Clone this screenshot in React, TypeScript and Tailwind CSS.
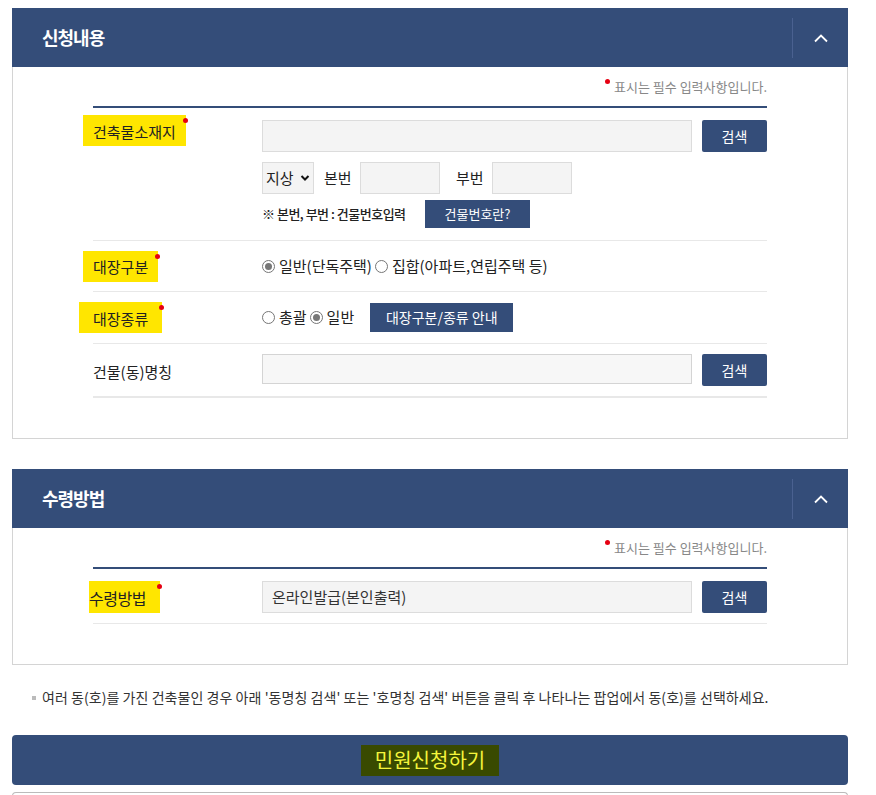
import React from 'react';

const font = { fontFamily: '"Noto Sans CJK KR", "Noto Sans", sans-serif' };

const Header: React.FC<{ title: string }> = ({ title }) => (
  <div className="flex items-center h-[59px] bg-[#344d79] text-white">
    <h2 className="flex-1 pl-[30px] text-[18px] font-bold tracking-[-1px]">{title}</h2>
    <div className="flex items-center justify-center w-[56px] h-[40px] border-l border-[#4a6190]">
      <svg width="16" height="10" viewBox="0 0 16 10" fill="none">
        <path d="M2 8.5 L8 2.5 L14 8.5" stroke="white" strokeWidth="1.8" />
      </svg>
    </div>
  </div>
);

const RequiredNote: React.FC = () => (
  <div className="flex justify-end pt-[11px] pr-[80px]">
    <span className="relative pl-[9px] text-[13px] text-[#888] leading-[18px]">
      <span className="absolute left-0 top-[1px] w-[5px] h-[5px] rounded-full bg-[#e60012]" />
      표시는 필수 입력사항입니다.
    </span>
  </div>
);

const Label: React.FC<{ text: string; required?: boolean; className?: string }> = ({ text, required, className }) => (
  <span className={`relative inline-flex items-end h-[31px] pb-[3px] bg-[#ffe600] text-[15px] text-[#222] ${className ?? ''}`}>
    {text}
    {required && <span className="absolute right-[-2px] top-[3px] w-[5px] h-[5px] rounded-full bg-[#e60012]" />}
  </span>
);

const Btn: React.FC<{ text: string; className?: string }> = ({ text, className }) => (
  <button className={`flex items-center justify-center bg-[#344d79] text-white rounded-[2px] ${className ?? ''}`}>{text}</button>
);

const Radio: React.FC<{ checked?: boolean; text: string }> = ({ checked, text }) => (
  <label className="inline-flex items-center gap-[4px] text-[15px] text-[#222]">
    <span className="flex items-center justify-center w-[13px] h-[13px] rounded-full border border-[#767676] bg-white">
      {checked && <span className="w-[7px] h-[7px] rounded-full bg-[#777]" />}
    </span>
    {text}
  </label>
);

const App: React.FC = () => {
  return (
    <div className="w-[876px] bg-white pt-2 pl-3" style={font}>
      <div className="w-[836px]">
        {/* 신청내용 */}
        <section>
          <Header title="신청내용" />
          <div className="border-x border-b border-[#d4d4d4] pb-[40px]">
            <RequiredNote />
            <div className="mx-[80px] mt-[10px] border-t-2 border-[#344d79]">
              <div className="flex items-start pt-[7px] pb-[12px] border-b border-[#e8e8e8]">
                <div className="w-[169px]">
                  <Label text="건축물소재지" required className="ml-[-10px] px-[10px]" />
                </div>
                <div className="flex-1 pt-[5px]">
                  <div className="flex gap-[10px]">
                    <input className="w-[430px] h-[32px] bg-[#f4f4f4] border border-[#dcdcdc]" />
                    <Btn text="검색" className="w-[65px] h-[32px] text-[14px]" />
                  </div>
                  <div className="flex items-center mt-[10px] text-[15px] text-[#222]">
                    <div className="flex items-center gap-[6px] w-[52px] h-[32px] pl-[3px] bg-[#f4f4f4] border border-[#dcdcdc]">
                      지상
                      <svg width="10" height="8" viewBox="0 0 10 8" fill="none">
                        <path d="M1.5 2 L5 5.5 L8.5 2" stroke="#111" strokeWidth="2" />
                      </svg>
                    </div>
                    <span className="ml-[10px] w-[36px]">본번</span>
                    <input className="w-[80px] h-[32px] bg-[#f4f4f4] border border-[#dcdcdc]" />
                    <span className="ml-[16px] w-[36px]">부번</span>
                    <input className="w-[80px] h-[32px] bg-[#f4f4f4] border border-[#dcdcdc]" />
                  </div>
                  <div className="flex items-center mt-[6px]">
                    <span className="w-[163px] text-[13px] text-[#222] font-medium tracking-[-0.5px]">※ 본번, 부번 : 건물번호입력</span>
                    <Btn text="건물번호란?" className="w-[105px] h-[28px] text-[13px] rounded-none" />
                  </div>
                </div>
              </div>
              <div className="flex items-center h-[51px] border-b border-[#e8e8e8]">
                <div className="w-[169px]">
                  <Label text="대장구분" required className="ml-[-10px] px-[10px]" />
                </div>
                <div className="flex items-center gap-[3px] pt-[1px]">
                  <Radio checked text="일반(단독주택)" />
                  <Radio text="집합(아파트,연립주택 등)" />
                </div>
              </div>
              <div className="flex items-center h-[52px] border-b border-[#e8e8e8]">
                <div className="w-[169px]">
                  <Label text="대장종류" required className="ml-[-14px] px-[14px]" />
                </div>
                <div className="flex items-center gap-[3px]">
                  <Radio text="총괄" />
                  <Radio checked text="일반" />
                  <Btn text="대장구분/종류 안내" className="ml-[13px] w-[143px] h-[29px] text-[14px] rounded-none" />
                </div>
              </div>
              <div className="flex items-center h-[54px] border-b-2 border-[#e8e8e8]">
                <div className="w-[169px] text-[15px] text-[#222] pt-[4px]">건물(동)명칭</div>
                <div className="flex gap-[10px]">
                  <input className="w-[430px] h-[30px] bg-[#f7f7f7] border border-[#d4d4d4]" />
                  <Btn text="검색" className="w-[65px] h-[32px] text-[14px]" />
                </div>
              </div>
            </div>
          </div>
        </section>

        {/* 수령방법 */}
        <section className="mt-[30px]">
          <Header title="수령방법" />
          <div className="border-x border-b border-[#d4d4d4] pb-[40px]">
            <RequiredNote />
            <div className="mx-[80px] mt-[10px] border-t-2 border-[#344d79]">
              <div className="flex items-center pt-[12px] pb-[10px] border-b border-[#e8e8e8]">
                <div className="w-[169px]">
                  <Label text="수령방법" required className="ml-[-4px] w-[71px] h-[32px] text-[16px] tracking-[-0.5px]" />
                </div>
                <div className="flex gap-[10px]">
                  <div className="flex items-center w-[430px] h-[32px] px-[9px] bg-[#f4f4f4] border border-[#dcdcdc] text-[15px] text-[#333]">
                    온라인발급(본인출력)
                  </div>
                  <Btn text="검색" className="w-[65px] h-[32px] text-[14px]" />
                </div>
              </div>
            </div>
          </div>
        </section>

        <p className="flex items-center gap-[6px] mt-[22px] pl-[20px] text-[14px] text-[#333] tracking-[0.05px]">
          <span className="w-[4px] h-[4px] bg-[#bbb]" />
          여러 동(호)를 가진 건축물인 경우 아래 '동명칭 검색' 또는 '호명칭 검색' 버튼을 클릭 후 나타나는 팝업에서 동(호)를 선택하세요.
        </p>

        <button className="flex items-center justify-center w-full h-[50px] mt-[27px] bg-[#344d79] rounded-[4px]">
          <span className="flex items-center justify-center w-[138px] h-[31px] bg-[#394a00] text-[20px] text-[#f5f53c]">
            민원신청하기
          </span>
        </button>

        <div className="h-[10px] mt-[7px] border-x border-t border-[#bbb] rounded-t-[4px]" />
      </div>
    </div>
  );
};

export default App;
